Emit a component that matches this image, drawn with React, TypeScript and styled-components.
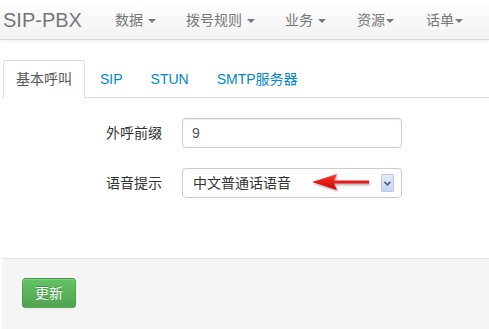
import styled, { createGlobalStyle } from 'styled-components'

const GlobalStyle = createGlobalStyle`
  html, body {
    margin: 0;
    padding: 0;
    background: #fff;
  }
  body {
    font-family: 'Liberation Sans', 'Noto Sans CJK SC', sans-serif;
    font-size: 14px;
    line-height: 20px;
    color: #333;
  }
`

const Page = styled.div`
  width: 489px;
  height: 329px;
  overflow: hidden;
  display: flex;
  flex-direction: column;
`

const Navbar = styled.div`
  height: 39px;
  display: flex;
  align-items: center;
  background: linear-gradient(to bottom, #ffffff, #f2f2f2);
  border-bottom: 1px solid #d4d4d4;
  box-shadow: 0 1px 4px rgba(0, 0, 0, 0.065);
`

const Brand = styled.div`
  padding-left: 3px;
  margin-right: 18px;
  font-size: 20px;
  color: #777;
`

const NavList = styled.div`
  display: flex;
`

const NavItem = styled.div<{ $tight?: boolean }>`
  display: flex;
  align-items: center;
  gap: ${(p) => (p.$tight ? '1px' : '5px')};
  padding: 0 ${(p) => (p.$tight ? '16px' : '15px')};
  color: #777;
  font-size: 14px;
`

const Caret = styled.b`
  display: inline-block;
  width: 0;
  height: 0;
  margin-top: 2px;
  border-top: 4px solid #777;
  border-left: 4px solid transparent;
  border-right: 4px solid transparent;
`

const Content = styled.div`
  flex: 1;
  margin-left: 2px;
  display: flex;
  flex-direction: column;
`

const Tabs = styled.div`
  margin-top: 20px;
  padding-left: 1px;
  display: flex;
  border-bottom: 1px solid #ddd;
`

const Tab = styled.div<{ $active?: boolean }>`
  padding: 8px 12px;
  margin-right: 2px;
  margin-bottom: -1px;
  line-height: 20px;
  border: 1px solid ${(p) => (p.$active ? '#ddd' : 'transparent')};
  border-bottom-color: ${(p) => (p.$active ? '#fff' : 'transparent')};
  border-radius: 4px 4px 0 0;
  background: ${(p) => (p.$active ? '#fff' : 'transparent')};
  color: ${(p) => (p.$active ? '#555' : '#0088cc')};
`

const Form = styled.div`
  padding-top: 20px;
  display: flex;
  flex-direction: column;
  gap: 20px;
  height: 140px;
`

const Row = styled.div`
  display: flex;
  align-items: center;
`

const Label = styled.div`
  width: 160px;
  text-align: right;
  margin-right: 20px;
  color: #333;
`

const Input = styled.div`
  box-sizing: border-box;
  width: 220px;
  height: 30px;
  padding: 4px 9px;
  border: 1px solid #ccc;
  border-radius: 4px;
  box-shadow: inset 0 1px 1px rgba(0, 0, 0, 0.075);
  color: #555;
  line-height: 20px;
`

const Select = styled.div`
  position: relative;
  box-sizing: border-box;
  width: 220px;
  height: 30px;
  padding: 4px 10px;
  border: 1px solid #ccc;
  border-radius: 4px;
  display: flex;
  align-items: center;
  justify-content: space-between;
  color: #333;
`

const DropButton = styled.div`
  box-sizing: border-box;
  width: 13px;
  height: 18px;
  margin-right: -3px;
  display: flex;
  align-items: center;
  justify-content: center;
  background: linear-gradient(to bottom, #e3ebfc, #c6d6f7);
  border: 1px solid #b7c8ec;
  border-radius: 1px;
`

const Pointer = styled.svg`
  position: absolute;
  left: 128px;
  top: 3px;
`

const Footer = styled.div`
  flex: 1;
  padding: 19px 20px 20px;
  background: #f5f5f5;
  border-top: 1px solid #e5e5e5;
`

const Button = styled.div`
  display: inline-block;
  padding: 4px 12px;
  color: #fff;
  line-height: 20px;
  border-radius: 4px;
  border: 1px solid rgba(0, 0, 0, 0.12);
  background: linear-gradient(to bottom, #62c462, #51a351);
  box-shadow: inset 0 1px 0 rgba(255, 255, 255, 0.2), 0 1px 2px rgba(0, 0, 0, 0.05);
  text-shadow: 0 -1px 0 rgba(0, 0, 0, 0.25);
`

const App = () => {
  return (
    <>
      <GlobalStyle />
      <Page>
        <Navbar>
          <Brand>SIP-PBX</Brand>
          <NavList>
            <NavItem>
              数据 <Caret />
            </NavItem>
            <NavItem>
              拨号规则 <Caret />
            </NavItem>
            <NavItem>
              业务 <Caret />
            </NavItem>
            <NavItem $tight>
              资源<Caret />
            </NavItem>
            <NavItem $tight>
              话单<Caret />
            </NavItem>
          </NavList>
        </Navbar>
        <Content>
          <Tabs>
            <Tab $active>基本呼叫</Tab>
            <Tab>SIP</Tab>
            <Tab>STUN</Tab>
            <Tab>SMTP服务器</Tab>
          </Tabs>
          <Form>
            <Row>
              <Label>外呼前缀</Label>
              <Input>9</Input>
            </Row>
            <Row>
              <Label>语音提示</Label>
              <Select>
                <span>中文普通话语音</span>
                <DropButton>
                  <svg width="7" height="5" viewBox="0 0 7 5">
                    <path d="M0.5 0.8 L3.5 3.8 L6.5 0.8" fill="none" stroke="#4d6185" strokeWidth="1.6" />
                  </svg>
                </DropButton>
                <Pointer width="62" height="22" viewBox="0 0 62 22">
                  <defs>
                    <filter id="sh" x="-10%" y="-30%" width="130%" height="170%">
                      <feDropShadow dx="1" dy="1.5" stdDeviation="1.2" floodColor="#000" floodOpacity="0.35" />
                    </filter>
                    <linearGradient id="rg" x1="0" y1="0" x2="0" y2="1">
                      <stop offset="0" stopColor="#ff3a2a" />
                      <stop offset="1" stopColor="#c80000" />
                    </linearGradient>
                  </defs>
                  <path
                    d="M1 10 L26 2 L23 8.4 L58 8.4 L58 11.6 L23 11.6 L26 18 Z"
                    fill="url(#rg)"
                    filter="url(#sh)"
                  />
                </Pointer>
              </Select>
            </Row>
          </Form>
          <Footer>
            <Button>更新</Button>
          </Footer>
        </Content>
      </Page>
    </>
  )
}

export default App
